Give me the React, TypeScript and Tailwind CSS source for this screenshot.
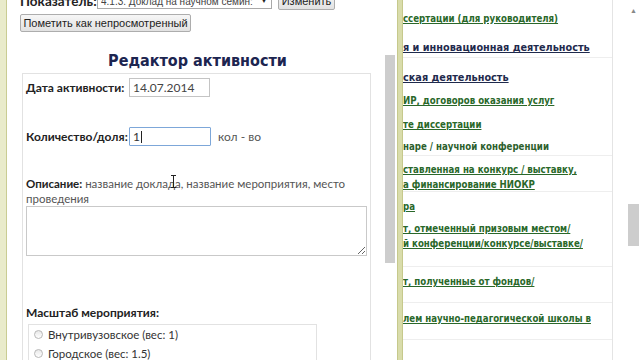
const links = [
  { h: "h-[33px]", pt: "pt-[11px]", lines: ["ссертации (для руководителя)"], kind: "link", border: false },
  { h: "h-[25px]", pt: "pt-[7px]", lines: ["я и инновационная деятельность"], kind: "head", border: true },
  { h: "h-[31px]", pt: "pt-[12px]", lines: ["ская деятельность"], kind: "head", border: false },
  { h: "h-[23px]", pt: "pt-[4px]", lines: ["ИР, договоров оказания услуг"], kind: "link", border: false },
  { h: "h-[23px]", pt: "pt-[5px]", lines: ["те диссертации"], kind: "link", border: false },
  { h: "h-[21px]", pt: "pt-[4px]", lines: ["наре / научной конференции"], kind: "plain", border: true },
  { h: "h-[36px]", pt: "pt-[6px]", lines: ["ставленная на конкурс / выставку,", "а финансирование НИОКР"], kind: "link", border: true },
  { h: "h-[25px]", pt: "pt-[7px]", lines: ["ра"], kind: "link", border: false },
  { h: "h-[50px]", pt: "pt-[4px]", lines: ["т, отмеченный призовым местом/", "й конференции/конкурсе/выставке/"], kind: "link", border: true },
  { h: "h-[36px]", pt: "pt-[7px]", lines: ["т, полученные от фондов/"], kind: "link", border: true },
  { h: "h-[37px]", pt: "pt-[8px]", lines: ["лем научно-педагогической школы в"], kind: "link", border: true },
];

function Radio({ label }: { label: string }) {
  return (
    <div className="flex items-center gap-[5px] h-[19px]">
      <span className="w-[9px] h-[9px] rounded-full border border-[#b8b8b8] bg-gradient-to-b from-[#e8e8e8] to-white" />
      <span className="text-[11.5px] text-[#333]">{label}</span>
    </div>
  );
}

export default function App() {
  return (
    <div className="w-[640px] h-[360px] overflow-hidden flex bg-white font-['Lato',sans-serif]">
      {/* dialog */}
      <div className="flex h-full shrink-0">
        <div className="w-[7px] h-full bg-[#e9ebcb] border-r border-[#c9cc93]" />
        <div className="w-[378px] h-full bg-white overflow-hidden pl-[13px] whitespace-nowrap">
          <div className="flex items-center h-[16px] -mt-[7px]">
            <span className="text-[13.5px] font-bold text-[#222] w-[77px] shrink-0">Показатель:</span>
            <div className="w-[175px] h-[16px] shrink-0 border border-[#a9a9a9] flex items-center justify-between px-[3px] text-[10px] text-[#444] bg-white overflow-hidden font-['Liberation_Sans',sans-serif]">
              <span className="overflow-hidden">4.1.3. Доклад на научном семин:</span>
              <span className="text-[8px] text-[#222] ml-[3px]">▼</span>
            </div>
            <div className="ml-[6px] w-[57px] h-[17px] shrink-0 border border-[#adadad] rounded-[2px] bg-gradient-to-b from-[#f6f6f6] to-[#e2e2e2] text-[11px] text-[#222] flex items-center justify-center font-['Liberation_Sans',sans-serif]">
              Изменить
            </div>
          </div>
          <div className="mt-[5px] w-[171px] h-[18px] border border-[#adadad] rounded-[2px] bg-gradient-to-b from-[#f6f6f6] to-[#e2e2e2] text-[11px] text-[#222] flex items-center justify-center font-['Liberation_Sans',sans-serif]">
            Пометить как непросмотренный
          </div>
          <div className="h-[41px] flex items-end justify-center pr-[10px]">
            <span className="font-['DejaVu_Sans_Condensed','DejaVu_Sans',sans-serif] font-bold text-[16px] text-[#1c2550]">
              Редактор активности
            </span>
          </div>
          <div className="ml-[2px] w-[349px] h-[300px] border border-[#e2e2e2] px-[3px] pt-[4px]">
            <div className="flex items-center h-[19px]">
              <span className="w-[103px] text-[12px] font-bold text-[#222]">Дата активности:</span>
              <div className="w-[81px] h-[19px] border border-[#c4c4c4] flex items-center px-[3px] text-[12px] text-[#444]">
                14.07.2014
              </div>
            </div>
            <div className="flex items-center h-[19px] mt-[30px]">
              <span className="w-[103px] text-[12px] font-bold text-[#222]">Количество/доля:</span>
              <div className="w-[82px] h-[19px] border border-[#7da7d9] rounded-[1px] flex items-center px-[3px] text-[12px] text-[#333]">
                1<span className="w-px h-[12px] bg-[#222] ml-px" />
              </div>
              <span className="ml-[7px] text-[12px] text-[#555]">кол - во</span>
            </div>
            <div className="relative mt-[30px] text-[11.5px] leading-[15px] text-[#555] pr-[20px] whitespace-normal">
              <span className="font-bold text-[#222]">Описание:</span> название доклада, название мероприятия, место проведения
              <svg className="absolute left-[144px] top-[-1px]" width="7" height="13" viewBox="0 0 7 13">
                <path d="M1 0.5h5M3.5 0.5v12M1 12.5h5" stroke="#222" strokeWidth="1" fill="none" />
              </svg>
            </div>
            <textarea className="block mt-0 w-[341px] h-[50px] border border-[#c9c9c9] resize-y outline-none" />
            <div className="mt-[48px] text-[12px] font-bold text-[#222]">Масштаб мероприятия:</div>
            <div className="mt-[2px] ml-[2px] w-[289px] h-[60px] border border-[#e2e2e2] pl-[5px] pt-0">
              <Radio label="Внутривузовское (вес: 1)" />
              <Radio label="Городское (вес: 1.5)" />
            </div>
          </div>
        </div>
        <div className="w-[12px] h-full bg-white pt-[55px]">
          <div className="w-[10px] h-[208px] bg-[#cdcdcd]" />
        </div>
        <div className="w-[6px] h-full bg-[#d9dcab] border-x border-[#c6c98c]" />
      </div>

      {/* page behind */}
      <div className="flex-1 flex h-full">
        <div className="w-[210px] h-full border-r border-[#e4e4e4] overflow-hidden font-['DejaVu_Sans_Condensed','DejaVu_Sans',sans-serif]">
          {links.map((l, i) => (
            <div key={i} className={`${l.h} ${l.pt} ${l.border ? "border-b border-[#eeeeee]" : ""} whitespace-nowrap`}>
              {l.lines.map((t) => (
                <div
                  key={t}
                  className={
                    l.kind === "head"
                      ? "text-[10.8px] leading-[15px] font-bold text-[#1f2a4d] underline"
                      : l.kind === "plain"
                      ? "text-[9.6px] leading-[15px] font-bold text-[#2d5f2d]"
                      : "text-[9.6px] leading-[15px] font-bold text-[#2a682a] underline"
                  }
                >
                  {t}
                </div>
              ))}
            </div>
          ))}
        </div>
        <div className="flex-1" />
        <div className="w-[13px] h-full flex flex-col items-center pt-[7px]">
          <span className="text-[7px] text-[#888] leading-none">▲</span>
          <div className="mt-[190px] w-[11px] h-[42px] bg-[#cdcdcd]" />
        </div>
      </div>
    </div>
  );
}
